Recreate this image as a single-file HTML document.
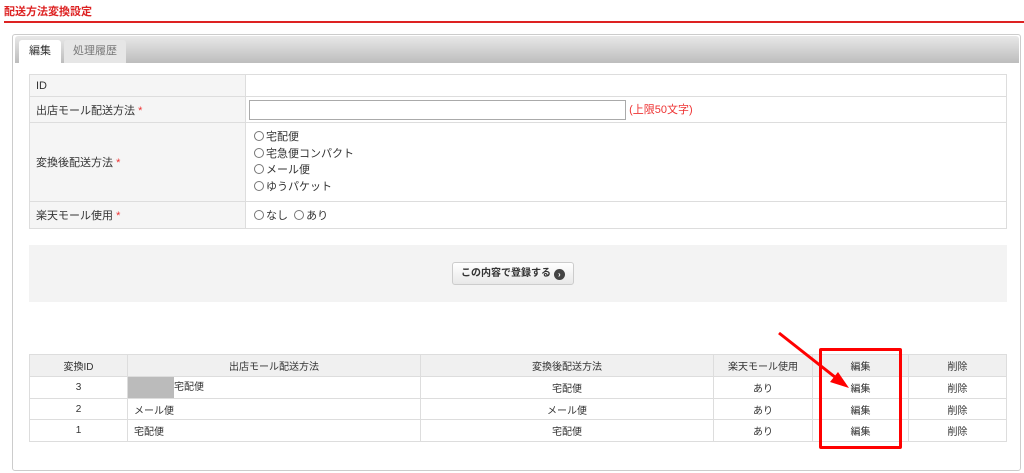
<!DOCTYPE html>
<html><head><meta charset="utf-8"><style>
*{box-sizing:border-box;margin:0;padding:0}
body{width:1024px;height:473px;background:#fff;font-family:"Liberation Sans","Noto Sans CJK JP",sans-serif;font-size:11px;color:#333;position:relative;overflow:hidden}
.a{position:absolute}
table{border-collapse:collapse;position:absolute}
td{border:1px solid #ddd;padding:0 6px}
.lbl{background:#f5f5f5}
.r{color:#e33}
.rad{display:inline-block;width:10px;height:10px;border:1px solid #777;border-radius:50%;vertical-align:-1px;margin-right:2px}
</style></head><body>
<div class="a" style="left:4px;top:3px;color:#d22;font-weight:bold;font-size:11px">配送方法変換設定</div>
<div class="a" style="left:4px;top:21px;width:1020px;height:2px;background:#d22"></div>
<div class="a" style="left:12px;top:34px;width:1009px;height:437px;border:1px solid #ccc;border-radius:3px"></div>
<div class="a" style="left:15px;top:36px;width:1004px;height:27px;background:linear-gradient(#e8e8e8,#bdbdbd);border-radius:3px 3px 0 0"></div>
<div class="a" style="left:19px;top:40px;width:42px;height:24px;background:#fff;border-radius:3px 3px 0 0;text-align:center;line-height:22px">編集</div>
<div class="a" style="left:64px;top:40px;width:62px;height:23px;background:#e6e6e6;border-radius:3px 3px 0 0;text-align:center;line-height:22px;color:#777">処理履歴</div>
<table style="left:29px;top:74px;width:978px">
<tr style="height:22px"><td class="lbl" style="width:216px">ID</td><td></td></tr>
<tr style="height:26px"><td class="lbl">出店モール配送方法 <span class="r">*</span></td><td style="padding-left:3px"><span style="display:inline-block;width:377px;height:20px;border:1px solid #aaa;vertical-align:middle"></span> <span class="r">(上限50文字)</span></td></tr>
<tr style="height:79px"><td class="lbl">変換後配送方法 <span class="r">*</span></td><td style="line-height:16.5px;padding-left:8px"><span class="rad"></span>宅配便<br><span class="rad"></span>宅急便コンパクト<br><span class="rad"></span>メール便<br><span class="rad"></span>ゆうパケット</td></tr>
<tr style="height:27px"><td class="lbl">楽天モール使用 <span class="r">*</span></td><td style="padding-left:8px"><span class="rad"></span>なし &nbsp;<span class="rad"></span>あり</td></tr>
</table>
<div class="a" style="left:29px;top:245px;width:978px;height:57px;background:#f3f3f3"></div>
<div class="a" style="left:452px;top:262px;width:122px;height:23px;border:1px solid #ccc;border-radius:3px;background:linear-gradient(#fff,#e8e8e8);font-size:10px;font-weight:bold;line-height:21px;padding-left:8px">この内容で登録する <span style="display:inline-block;width:11px;height:11px;border-radius:50%;background:#444;color:#fff;font-size:8px;line-height:11px;text-align:center;vertical-align:-1px">›</span></div>
<table style="left:29px;top:354px;width:978px;font-size:10px">
<tr style="height:22px;background:#f0f0f0;text-align:center"><td style="width:98px">変換ID</td><td style="width:293px">出店モール配送方法</td><td style="width:293px">変換後配送方法</td><td style="width:99px">楽天モール使用</td><td style="width:96px">編集</td><td>削除</td></tr>
<tr style="height:22px;text-align:center"><td>3</td><td style="text-align:left;padding-left:0"><span style="display:inline-block;width:46px;height:21px;background:#bbb;vertical-align:middle"></span>宅配便</td><td>宅配便</td><td>あり</td><td>編集</td><td>削除</td></tr>
<tr style="height:21px;text-align:center"><td>2</td><td style="text-align:left">メール便</td><td>メール便</td><td>あり</td><td>編集</td><td>削除</td></tr>
<tr style="height:22px;text-align:center"><td>1</td><td style="text-align:left">宅配便</td><td>宅配便</td><td>あり</td><td>編集</td><td>削除</td></tr>
</table>
<div class="a" style="left:819px;top:348px;width:83px;height:101px;border:3px solid #f00;border-radius:2px"></div>
<svg class="a" style="left:0;top:0" width="1024" height="473"><line x1="779" y1="333" x2="840" y2="381" stroke="#f00" stroke-width="3"/><polygon points="849,388 830,382 838,372" fill="#f00"/></svg>
</body></html>
